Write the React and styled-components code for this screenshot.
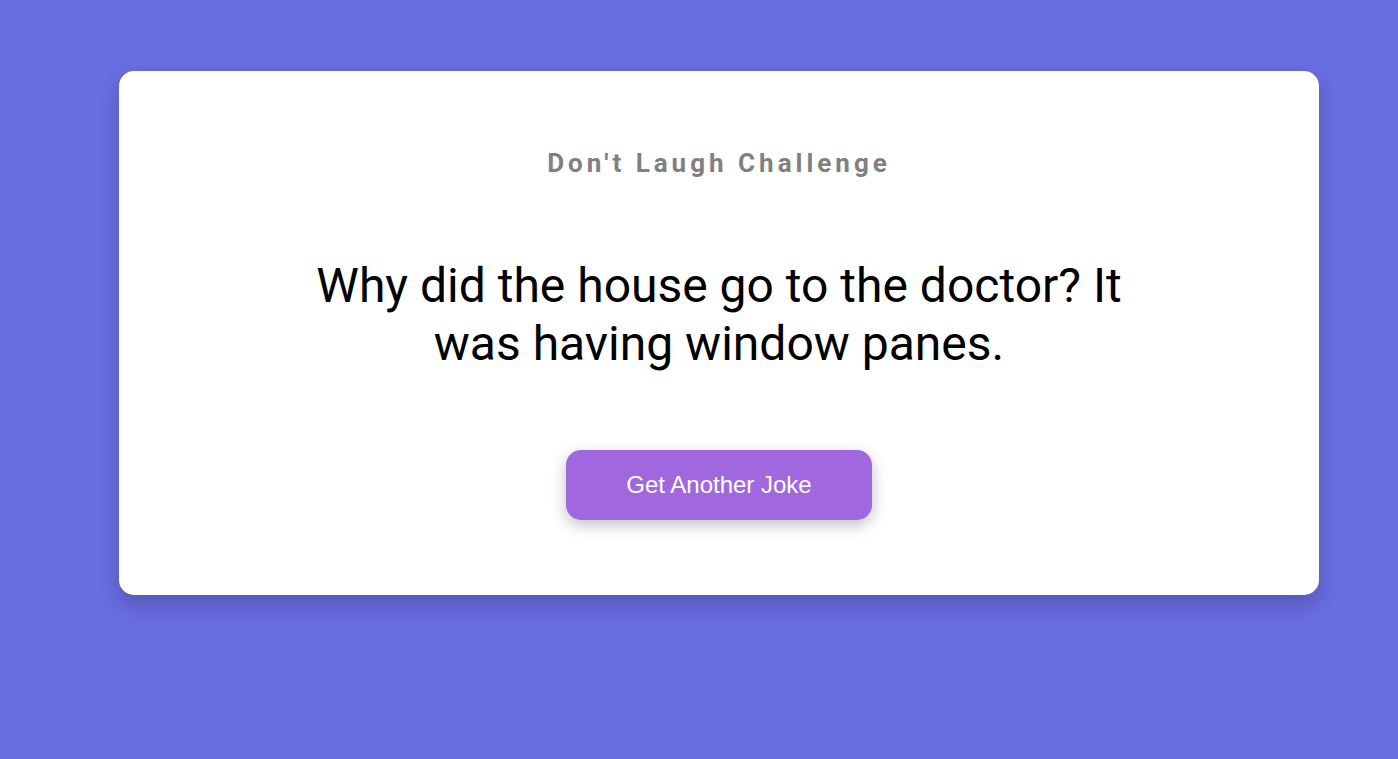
import React from "react";
import styled, { createGlobalStyle } from "styled-components";

const Global = createGlobalStyle`
  html, body { margin: 0; padding: 0; }
  body {
    background: #686de0;
    min-height: 100vh;
    font-family: Roboto, "Noto Sans", sans-serif;
  }
`;

const Page = styled.main`
  display: flex;
  justify-content: center;
  padding: 71px 0 71px 40px;
`;

const Card = styled.section`
  width: 1200px;
  box-sizing: border-box;
  background: #ffffff;
  border-radius: 15px;
  box-shadow: 0 10px 20px rgba(0, 0, 0, 0.2);
  padding: 75px 40px;
  display: flex;
  flex-direction: column;
  align-items: center;
  gap: 77px;
`;

const Title = styled.h3`
  margin: 0;
  font-family: Roboto, sans-serif;
  font-weight: 700;
  font-size: 26px;
  line-height: 34px;
  letter-spacing: 4px;
  color: #808080;
`;

const Joke = styled.p`
  margin: 0;
  max-width: 840px;
  text-align: center;
  font-family: Roboto, sans-serif;
  font-size: 48px;
  line-height: 58px;
  letter-spacing: 0;
  color: #000;
`;

const Button = styled.button`
  border: none;
  border-radius: 15px;
  background: #a067de;
  color: #fff;
  font-family: "Liberation Sans", Arial, sans-serif;
  font-size: 24px;
  line-height: 28px;
  padding: 21px 60px;
  box-shadow: 0 5px 15px rgba(0, 0, 0, 0.25);
  cursor: pointer;
`;

export default function App() {
  return (
    <>
      <Global />
      <Page>
        <Card>
          <Title>Don't Laugh Challenge</Title>
          <Joke>Why did the house go to the doctor? It was having window panes.</Joke>
          <Button>Get Another Joke</Button>
        </Card>
      </Page>
    </>
  );
}
